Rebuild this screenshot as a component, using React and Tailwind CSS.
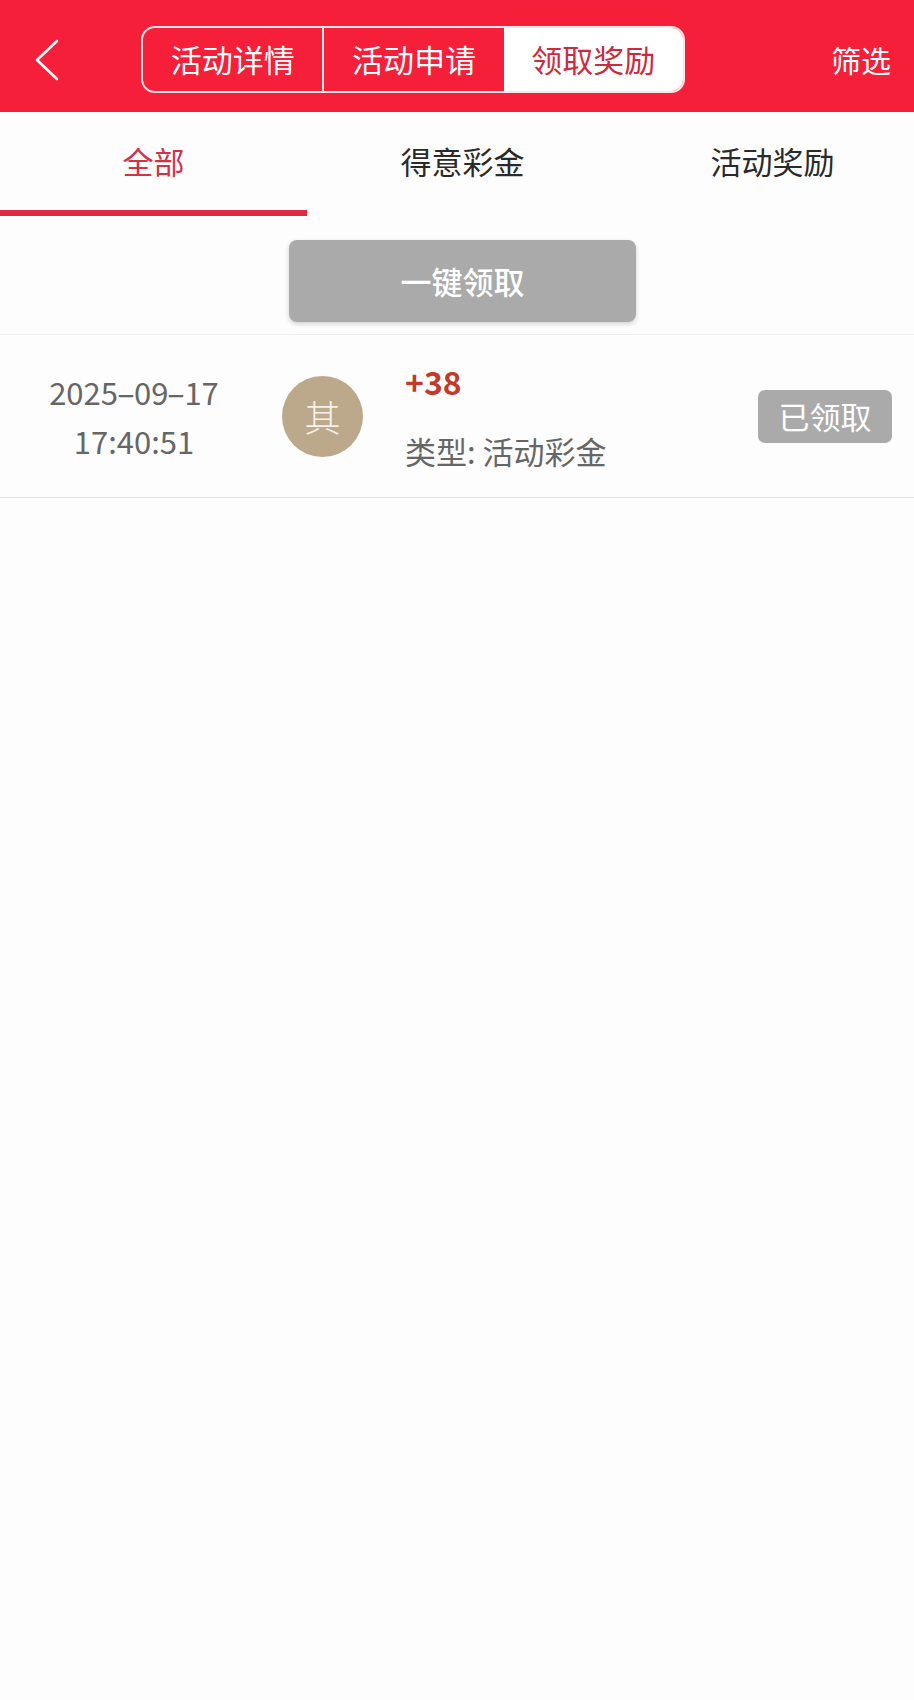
import React, { useState } from "react";

const font = { fontFamily: '"Noto Sans CJK SC", "Noto Sans", sans-serif' };

function BackIcon() {
  return (
    <svg width="28" height="44" viewBox="0 0 28 44" fill="none">
      <path
        d="M24 3 L4 22 L24 41"
        stroke="white"
        strokeWidth="2.6"
        strokeLinecap="round"
        strokeLinejoin="round"
      />
    </svg>
  );
}

export default function App() {
  const [seg, setSeg] = useState(2);
  const [tab, setTab] = useState(0);
  const segments = ["活动详情", "活动申请", "领取奖励"];
  const tabs = ["全部", "得意彩金", "活动奖励"];

  return (
    <div className="min-h-[1700px] w-[914px] overflow-hidden bg-[#fdfdfd]" style={font}>
      {/* Header */}
      <div className="flex h-[112px] items-center bg-[#f51f3a] pt-[7px]">
        <div className="flex w-[141px] items-center pl-[33px]">
          <BackIcon />
        </div>
        <div className="flex h-[67px] w-[544px] overflow-hidden rounded-[14px] border-2 border-[#fbe3e6]">
          {segments.map((s, i) => (
            <button
              key={s}
              onClick={() => setSeg(i)}
              className={
                i === seg
                  ? "flex flex-1 items-center justify-center bg-white text-[31px] text-[#cc2a3e]"
                  : i === 0
                  ? "flex flex-1 items-center justify-center border-r-2 border-[#fbe3e6] text-[31px] text-white"
                  : "flex flex-1 items-center justify-center text-[31px] text-white"
              }
            >
              {s}
            </button>
          ))}
        </div>
        <div className="flex flex-1 justify-end pr-[23px] text-[30px] text-white">
          筛选
        </div>
      </div>

      {/* Tabs */}
      <div className="grid w-[927px] grid-cols-[307px_311px_309px]">
        {tabs.map((t, i) => (
          <button key={t} onClick={() => setTab(i)} className="flex flex-col">
            <div
              className={
                i === tab
                  ? "flex h-[98px] items-center justify-center text-[31px] text-[#d3304a]"
                  : "flex h-[98px] items-center justify-center text-[31px] text-[#2a2a2a]"
              }
            >
              {t}
            </div>
            <div
              className={i === tab ? "h-[6px] w-full bg-[#dc2a44]" : "h-[6px] w-full"}
            />
          </button>
        ))}
      </div>

      {/* One-click claim */}
      <div className="flex justify-center border-b border-[#eeeeee] pt-[24px] pb-[12px] pl-[11px]">
        <button className="flex h-[82px] w-[347px] items-center justify-center rounded-[8px] bg-[#aaaaaa] text-[31px] font-medium text-white shadow-[0_2px_5px_rgba(0,0,0,0.18)]">
          一键领取
        </button>
      </div>

      {/* Record row */}
      <div className="flex h-[163px] items-center border-b border-[#dddddd]">
        <div className="flex w-[268px] flex-col items-center text-[31px] leading-[49px] text-[#666666]">
          <span>
            2025<span className="inline-block w-[16px] scale-x-[1.8] text-center">-</span>09
            <span className="inline-block w-[16px] scale-x-[1.8] text-center">-</span>17
          </span>
          <span>17:40:51</span>
        </div>
        <div className="ml-[14px] flex h-[81px] w-[81px] items-center justify-center rounded-full bg-[#bca98c] text-[36px] font-light text-[#f8f2e8]">
          其
        </div>
        <div className="ml-[42px] flex flex-1 flex-col">
          <span className="text-[32px] font-bold leading-[40px] text-[#c13a2c]">+38</span>
          <span className="mt-[30px] text-[31px] leading-[40px] text-[#666666]">
            类型: 活动彩金
          </span>
        </div>
        <div className="mr-[22px] flex h-[53px] w-[134px] items-center justify-center rounded-[7px] bg-[#aaaaaa] text-[31px] text-white">
          已领取
        </div>
      </div>
    </div>
  );
}
